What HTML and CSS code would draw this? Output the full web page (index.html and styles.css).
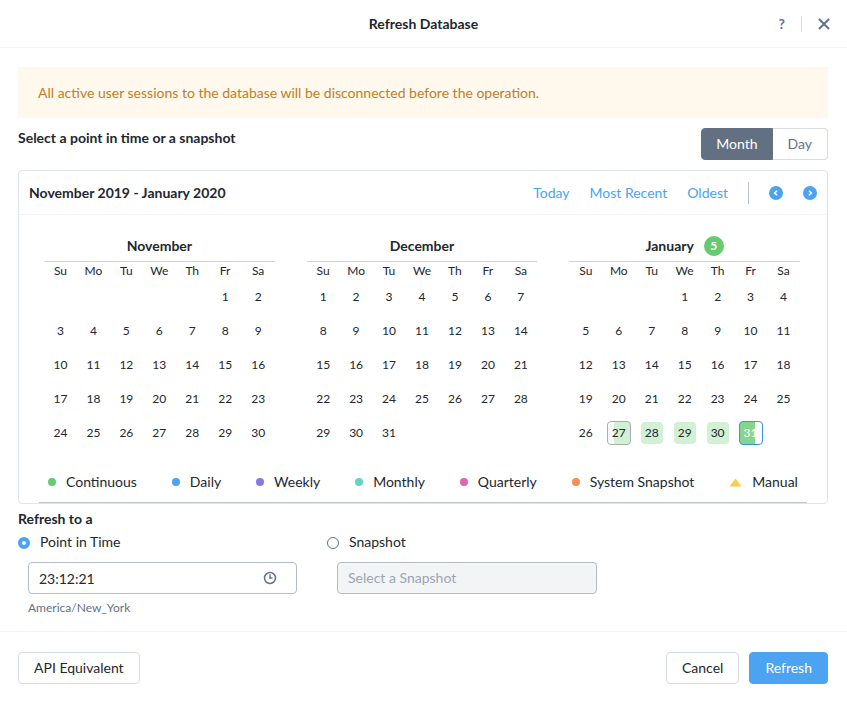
FILE: index.html
```html
<!DOCTYPE html>
<html lang="en">
<head>
<meta charset="utf-8">
<meta name="viewport" content="width=device-width, initial-scale=1">
<title>Refresh Database</title>
<link rel="stylesheet" href="styles.css">
</head>
<body>
<div class="dialog">
  <header class="dialog-header">
    <h1 class="dialog-title">Refresh Database</h1>
    <div class="header-actions">
      <button class="icon-button help" type="button">?</button>
      <span class="header-divider"></span>
      <button class="icon-button" type="button" aria-label="Close">
        <svg width="12" height="12" viewBox="0 0 12 12" fill="none" stroke="currentColor" stroke-width="2"><path d="M1 1l10 10M11 1L1 11"/></svg>
      </button>
    </div>
  </header>

  <main class="dialog-body">
    <p class="alert">All active user sessions to the database will be disconnected before the operation.</p>

    <div class="section-head">
      <h2 class="section-title">Select a point in time or a snapshot</h2>
      <div class="toggle">
        <button class="toggle-option active" type="button">Month</button>
        <button class="toggle-option" type="button">Day</button>
      </div>
    </div>

    <section class="calendar">
      <div class="calendar-head">
        <h3 class="section-title">November 2019 - January 2020</h3>
        <nav class="calendar-nav">
          <a href="#today">Today</a>
          <a href="#recent">Most Recent</a>
          <a href="#oldest">Oldest</a>
          <span class="nav-divider"></span>
          <button class="arrow" type="button" aria-label="Previous">
            <svg width="14" height="14" viewBox="0 0 14 14"><circle cx="7" cy="7" r="7" fill="#4ba3f2"/><path d="M8 4.700L5.700 7 8 9.300" fill="none" stroke="#fff" stroke-width="1.600"/></svg>
          </button>
          <button class="arrow" type="button" aria-label="Next">
            <svg width="14" height="14" viewBox="0 0 14 14"><circle cx="7" cy="7" r="7" fill="#4ba3f2"/><path d="M6 4.700L8.300 7 6 9.300" fill="none" stroke="#fff" stroke-width="1.600"/></svg>
          </button>
        </nav>
      </div>

      <div class="months">
        <table class="month">
          <caption><span class="month-name">November</span></caption>
          <thead><tr><th>Su</th><th>Mo</th><th>Tu</th><th>We</th><th>Th</th><th>Fr</th><th>Sa</th></tr></thead>
          <tbody>
            <tr><td></td><td></td><td></td><td></td><td></td><td>1</td><td>2</td></tr>
            <tr><td>3</td><td>4</td><td>5</td><td>6</td><td>7</td><td>8</td><td>9</td></tr>
            <tr><td>10</td><td>11</td><td>12</td><td>13</td><td>14</td><td>15</td><td>16</td></tr>
            <tr><td>17</td><td>18</td><td>19</td><td>20</td><td>21</td><td>22</td><td>23</td></tr>
            <tr><td>24</td><td>25</td><td>26</td><td>27</td><td>28</td><td>29</td><td>30</td></tr>
          </tbody>
        </table>
        <table class="month">
          <caption><span class="month-name">December</span></caption>
          <thead><tr><th>Su</th><th>Mo</th><th>Tu</th><th>We</th><th>Th</th><th>Fr</th><th>Sa</th></tr></thead>
          <tbody>
            <tr><td>1</td><td>2</td><td>3</td><td>4</td><td>5</td><td>6</td><td>7</td></tr>
            <tr><td>8</td><td>9</td><td>10</td><td>11</td><td>12</td><td>13</td><td>14</td></tr>
            <tr><td>15</td><td>16</td><td>17</td><td>18</td><td>19</td><td>20</td><td>21</td></tr>
            <tr><td>22</td><td>23</td><td>24</td><td>25</td><td>26</td><td>27</td><td>28</td></tr>
            <tr><td>29</td><td>30</td><td>31</td><td></td><td></td><td></td><td></td></tr>
          </tbody>
        </table>
        <table class="month">
          <caption><span class="month-name">January <span class="badge">5</span></span></caption>
          <thead><tr><th>Su</th><th>Mo</th><th>Tu</th><th>We</th><th>Th</th><th>Fr</th><th>Sa</th></tr></thead>
          <tbody>
            <tr><td></td><td></td><td></td><td>1</td><td>2</td><td>3</td><td>4</td></tr>
            <tr><td>5</td><td>6</td><td>7</td><td>8</td><td>9</td><td>10</td><td>11</td></tr>
            <tr><td>12</td><td>13</td><td>14</td><td>15</td><td>16</td><td>17</td><td>18</td></tr>
            <tr><td>19</td><td>20</td><td>21</td><td>22</td><td>23</td><td>24</td><td>25</td></tr>
            <tr><td>26</td><td><button class="day first" type="button">27</button></td><td><button class="day" type="button">28</button></td><td><button class="day" type="button">29</button></td><td><button class="day" type="button">30</button></td><td><button class="day selected" type="button">31</button></td><td></td></tr>
          </tbody>
        </table>
      </div>

      <ul class="legend">
        <li><span class="dot continuous"></span>Continuous</li>
        <li><span class="dot daily"></span>Daily</li>
        <li><span class="dot weekly"></span>Weekly</li>
        <li><span class="dot monthly"></span>Monthly</li>
        <li><span class="dot quarterly"></span>Quarterly</li>
        <li><span class="dot system"></span>System Snapshot</li>
        <li><svg width="13" height="10" viewBox="0 0 13 10"><path d="M6.500 1.500L12.500 9.500H0.500z" fill="#fbcd4b"/></svg>Manual</li>
      </ul>
      <div class="scroll-line"></div>
    </section>

    <fieldset class="target">
      <legend class="section-title">Refresh to a</legend>
      <div class="choices">
        <div class="choice">
          <label class="radio-label"><input type="radio" name="target" checked>Point in Time</label>
          <div class="time-field">
            <input class="field" type="text" value="23:12:21" aria-label="Time">
            <svg class="clock" width="14" height="14" viewBox="0 0 14 14" fill="none" stroke="#627386" stroke-width="1.500"><circle cx="7" cy="7" r="5.500"/><path d="M7 3.500V7h2.500"/></svg>
          </div>
          <p class="hint">America/New_York</p>
        </div>
        <div class="choice">
          <label class="radio-label"><input type="radio" name="target">Snapshot</label>
          <select class="field" disabled aria-label="Snapshot"><option>Select a Snapshot</option></select>
        </div>
      </div>
    </fieldset>
  </main>

  <footer class="dialog-footer">
    <button class="button" type="button">API Equivalent</button>
    <div class="footer-actions">
      <button class="button" type="button">Cancel</button>
      <button class="button primary" type="button">Refresh</button>
    </div>
  </footer>
</div>
</body>
</html>
```
FILE: styles.css
```css
* {
  box-sizing: border-box;
}

body {
  margin: 0;
  background: #fff;
  color: #22272e;
  font-family: Lato, "Liberation Sans", sans-serif;
  font-size: 14px;
  line-height: 20px;
}

h1, h2, h3, p, ul {
  margin: 0;
  padding: 0;
}

button, input, select {
  font: inherit;
  color: inherit;
}

button {
  cursor: pointer;
}

/* Header */
.dialog-header {
  display: grid;
  grid-template-columns: 1fr auto 1fr;
  align-items: center;
  height: 48px;
  padding: 0 17px;
  border-bottom: 1px solid #f2f4f6;
}

.dialog-title {
  grid-column: 2;
  font-size: 14px;
  font-weight: 700;
}

.header-actions {
  display: flex;
  justify-content: flex-end;
  align-items: center;
  gap: 16px;
}

.icon-button {
  display: flex;
  padding: 0;
  border: 0;
  background: none;
  color: #627386;
}

.help {
  font-weight: 700;
}

.header-divider {
  width: 1px;
  height: 16px;
  background: #d5dae2;
}

/* Body */
.dialog-body {
  padding: 19px 19px 14px 18px;
}

.alert {
  padding: 16px 20px 15px;
  background: #fff8ec;
  color: #c27d25;
}

.section-head {
  display: flex;
  justify-content: space-between;
  align-items: flex-start;
  padding: 10px 0;
}

.section-title {
  font-size: 14px;
  font-weight: 700;
}

.toggle {
  display: flex;
}

.toggle-option {
  height: 32px;
  padding: 0 15px;
  border: 1px solid #d8dde3;
  border-left: 0;
  border-radius: 0 4px 4px 0;
  background: #fff;
  color: #627386;
}

.toggle-option.active {
  padding: 0 14px;
  border: 1px solid #627082;
  border-radius: 4px 0 0 4px;
  background: #627082;
  color: #fff;
}

/* Calendar */
.calendar {
  border: 1px solid #dfe4e8;
  border-radius: 4px;
}

.calendar-head {
  display: flex;
  justify-content: space-between;
  align-items: center;
  height: 44px;
  padding: 0 10px;
  border-bottom: 1px solid #f2f4f6;
}

.calendar-nav {
  display: flex;
  align-items: center;
  gap: 20px;
}

.calendar-nav a {
  color: #4ba3f2;
  text-decoration: none;
}

.nav-divider {
  width: 1px;
  height: 22px;
  background: #b9c0ca;
}

.arrow {
  display: flex;
  padding: 0;
  border: 0;
  background: none;
}

.months {
  display: grid;
  grid-template-columns: repeat(3, 1fr);
  gap: 32px;
  padding: 16px 27px 0 25px;
}

.month {
  width: 100%;
  table-layout: fixed;
  border-collapse: collapse;
  font-size: 12px;
  line-height: 18px;
  text-align: center;
}

.month caption {
  height: 31px;
  border-bottom: 1px solid #cfd3d6;
  font-size: 14px;
  font-weight: 700;
}

.month-name {
  display: flex;
  justify-content: center;
  align-items: center;
  gap: 10px;
  height: 30px;
}

.badge {
  width: 20px;
  height: 20px;
  border-radius: 50%;
  background: #66ca70;
  color: #fff;
  font-size: 12px;
  line-height: 20px;
}

.month th {
  height: 18px;
  padding: 0;
  font-weight: 400;
}

.month td {
  height: 34px;
  padding: 0;
}

.day {
  display: block;
  width: 22px;
  height: 22px;
  margin: 0 auto;
  padding: 0;
  border: 0;
  border-radius: 4px;
  background: #d1f0d4;
}

.day.first,
.day.selected {
  width: 24px;
  height: 24px;
  border: 1px solid #a9aeb1;
}

.day.first {
  background: linear-gradient(to right, #fff 6px, #d1f0d4 6px);
}

.day.selected {
  border-color: #3c93e8;
  background: linear-gradient(to right, #85d58d 15px, #fff 15px);
  color: #fff;
}

.legend {
  display: flex;
  justify-content: space-between;
  padding: 22px 29px 10px;
  list-style: none;
}

.legend li {
  display: flex;
  align-items: center;
  gap: 10px;
}

.dot {
  width: 8px;
  height: 8px;
  border-radius: 50%;
}

.continuous { background: #66ca70; }
.daily { background: #4ba3f2; }
.weekly { background: #8579e8; }
.monthly { background: #63d2ca; }
.quarterly { background: #df65b0; }
.system { background: #f58f4f; }

.scroll-line {
  height: 1px;
  margin: 0 20px;
  background: #c0c5ca;
}

/* Refresh target */
.target {
  margin: 0;
  padding: 3px 0 0;
  border: 0;
}

.target .section-title {
  padding: 5px 0 0;
}

.choices {
  display: flex;
  gap: 40px;
  padding-left: 10px;
}

.choice {
  flex: 0 1 269px;
}

.choice + .choice {
  flex-basis: 260px;
}

.radio-label {
  display: flex;
  align-items: center;
  gap: 10px;
  margin-left: -10px;
}

.radio-label input {
  appearance: none;
  width: 12px;
  height: 12px;
  margin: 2px 0 0;
  border: 1px solid #627386;
  border-radius: 50%;
}

.radio-label input:checked {
  border: 4px solid #4ba3f2;
}

.time-field {
  position: relative;
}

.field {
  display: block;
  width: 100%;
  height: 32px;
  margin-top: 10px;
  padding: 0 10px;
  border: 1px solid #b5bcc9;
  border-radius: 4px;
  background: #fff;
}

select.field {
  appearance: none;
  background: #f2f4f6;
  color: #9aa5b5;
  opacity: 1;
}

.clock {
  position: absolute;
  right: 20px;
  top: 9px;
}

.hint {
  margin-top: 5px;
  color: #627386;
  font-size: 12px;
  line-height: 18px;
}

/* Footer */
.dialog-footer {
  display: flex;
  justify-content: space-between;
  padding: 20px 19px 17px 18px;
  border-top: 1px solid #f2f4f6;
}

.footer-actions {
  display: flex;
  gap: 10px;
}

.button {
  height: 32px;
  padding: 0 15px;
  border: 1px solid #d8dde3;
  border-radius: 4px;
  background: #fff;
}

.button.primary {
  border-color: #4ba3f2;
  background: #4ba3f2;
  color: #fff;
}
```
